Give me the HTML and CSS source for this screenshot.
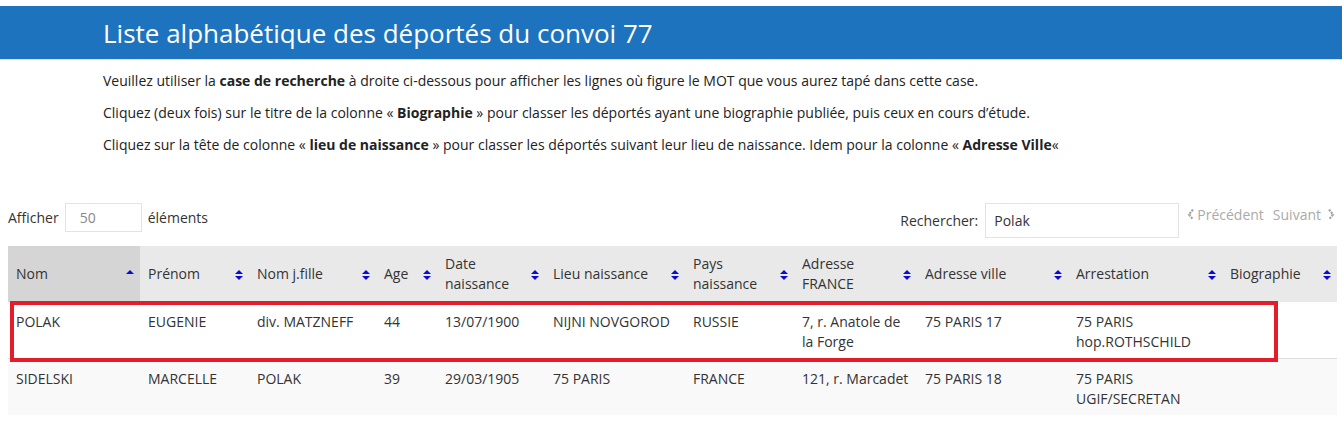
FILE: index.html
```html
<!DOCTYPE html>
<html lang="fr">
<head>
<meta charset="utf-8">
<title>Liste alphabétique des déportés du convoi 77</title>
<link rel="stylesheet" href="styles.css">
</head>
<body>
<header class="band">
  <h1 class="title">Liste alphabétique des déportés du convoi 77</h1>
</header>
<section class="intro">
  <p>Veuillez utiliser la <b>case de recherche</b> à droite ci-dessous pour afficher les lignes où figure le MOT que vous aurez tapé dans cette case.</p>
  <p>Cliquez (deux fois) sur le titre de la colonne « <b>Biographie</b> » pour classer les déportés ayant une biographie publiée, puis ceux en cours d’étude.</p>
  <p>Cliquez sur la tête de colonne « <b>lieu de naissance</b> » pour classer les déportés suivant leur lieu de naissance. Idem pour la colonne « <b>Adresse Ville</b>«</p>
</section>
<main class="wrap">
  <div class="controls">
    <div class="length">
      <span>Afficher</span>
      <span class="select">50</span>
      <span>éléments</span>
    </div>
    <div class="right">
      <label class="search">Rechercher: <span class="search-box">Polak</span></label>
      <div class="pager">
        <svg class="chev" width="8" height="13" viewBox="0 0 8 13"><path d="M6 1.5 L2 6.5 L6 11.5" fill="none" stroke="#a8a8a8" stroke-width="2.2" stroke-dasharray="2.2 1"/></svg>
        <span>Précédent</span>
        <span class="next">Suivant</span>
        <svg class="chev" width="8" height="13" viewBox="0 0 8 13"><path d="M2 1.5 L6 6.5 L2 11.5" fill="none" stroke="#a8a8a8" stroke-width="2.2" stroke-dasharray="2.2 1"/></svg>
      </div>
    </div>
  </div>
  <div class="table-wrap">
    <table class="data">
      <colgroup>
        <col style="width:132px"><col style="width:109px"><col style="width:127px"><col style="width:61px">
        <col style="width:108px"><col style="width:140px"><col style="width:109px"><col style="width:123px">
        <col style="width:151px"><col style="width:154px"><col style="width:115px">
      </colgroup>
      <thead>
        <tr>
          <th class="sorted"><div class="th"><span>Nom</span><svg class="sort" width="8" height="12" viewBox="0 0 8 12"><path d="M0 5 L4 1 L8 5 Z" fill="#0a0ad4"/></svg></div></th>
          <th><div class="th"><span>Prénom</span><svg class="sort" width="8" height="12" viewBox="0 0 8 12"><path d="M0 5 L4 1 L8 5 Z M0 7 L4 11 L8 7 Z" fill="#0a0ad4"/></svg></div></th>
          <th><div class="th"><span>Nom j.fille</span><svg class="sort" width="8" height="12" viewBox="0 0 8 12"><path d="M0 5 L4 1 L8 5 Z M0 7 L4 11 L8 7 Z" fill="#0a0ad4"/></svg></div></th>
          <th><div class="th"><span>Age</span><svg class="sort" width="8" height="12" viewBox="0 0 8 12"><path d="M0 5 L4 1 L8 5 Z M0 7 L4 11 L8 7 Z" fill="#0a0ad4"/></svg></div></th>
          <th><div class="th"><span>Date<br>naissance</span><svg class="sort" width="8" height="12" viewBox="0 0 8 12"><path d="M0 5 L4 1 L8 5 Z M0 7 L4 11 L8 7 Z" fill="#0a0ad4"/></svg></div></th>
          <th><div class="th"><span>Lieu naissance</span><svg class="sort" width="8" height="12" viewBox="0 0 8 12"><path d="M0 5 L4 1 L8 5 Z M0 7 L4 11 L8 7 Z" fill="#0a0ad4"/></svg></div></th>
          <th><div class="th"><span>Pays<br>naissance</span><svg class="sort" width="8" height="12" viewBox="0 0 8 12"><path d="M0 5 L4 1 L8 5 Z M0 7 L4 11 L8 7 Z" fill="#0a0ad4"/></svg></div></th>
          <th><div class="th"><span>Adresse<br>FRANCE</span><svg class="sort" width="8" height="12" viewBox="0 0 8 12"><path d="M0 5 L4 1 L8 5 Z M0 7 L4 11 L8 7 Z" fill="#0a0ad4"/></svg></div></th>
          <th><div class="th"><span>Adresse ville</span><svg class="sort" width="8" height="12" viewBox="0 0 8 12"><path d="M0 5 L4 1 L8 5 Z M0 7 L4 11 L8 7 Z" fill="#0a0ad4"/></svg></div></th>
          <th><div class="th"><span>Arrestation</span><svg class="sort" width="8" height="12" viewBox="0 0 8 12"><path d="M0 5 L4 1 L8 5 Z M0 7 L4 11 L8 7 Z" fill="#0a0ad4"/></svg></div></th>
          <th><div class="th"><span>Biographie</span><svg class="sort" width="8" height="12" viewBox="0 0 8 12"><path d="M0 5 L4 1 L8 5 Z M0 7 L4 11 L8 7 Z" fill="#0a0ad4"/></svg></div></th>
        </tr>
      </thead>
      <tbody>
        <tr class="odd">
          <td>POLAK</td><td>EUGENIE</td><td>div. MATZNEFF</td><td>44</td><td>13/07/1900</td><td>NIJNI NOVGOROD</td><td>RUSSIE</td><td>7, r. Anatole de la Forge</td><td>75 PARIS 17</td><td>75 PARIS hop.ROTHSCHILD</td><td></td>
        </tr>
        <tr class="even">
          <td>SIDELSKI</td><td>MARCELLE</td><td>POLAK</td><td>39</td><td>29/03/1905</td><td>75 PARIS</td><td>FRANCE</td><td>121, r. Marcadet</td><td>75 PARIS 18</td><td>75 PARIS UGIF/SECRETAN</td><td></td>
        </tr>
      </tbody>
    </table>
    <div class="highlight"></div>
  </div>
</main>
</body>
</html>
```

FILE: styles.css
```css
* { box-sizing: border-box; }
html, body { margin: 0; padding: 0; background: #fff; }
body {
  font-family: "Open Sans", "Noto Sans", "DejaVu Sans", sans-serif;
  font-size: 14px;
  color: #333;
}
.band {
  margin-top: 6px;
  height: 54px;
  background: #1e73be;
  border-bottom: 1px solid #d8e4ef;
  padding-left: 103px;
  display: flex;
  align-items: center;
}
.title {
  margin: 0;
  font-size: 26px;
  font-weight: 400;
  color: #fff;
  letter-spacing: 0;
}
.intro {
  padding: 5px 0 0 103px;
}
.intro p {
  margin: 0;
  line-height: 32px;
  font-size: 14px;
  color: #222;
}
.intro b { font-weight: 700; }
.wrap {
  padding: 42px 5px 0 8px;
}
.controls {
  display: flex;
  justify-content: space-between;
  align-items: flex-start;
  height: 43px;
}
.length {
  display: flex;
  align-items: center;
  gap: 6px;
  height: 29px;
  color: #333;
}
.select {
  width: 77px;
  height: 29px;
  border: 1px solid #e3e3e3;
  padding-left: 14px;
  line-height: 27px;
  color: #888;
}
.right {
  display: flex;
  align-items: flex-start;
}
.search {
  display: flex;
  align-items: center;
  gap: 7px;
  height: 35px;
}
.search-box {
  width: 194px;
  height: 35px;
  border: 1px solid #e3e3e3;
  padding-left: 8px;
  line-height: 33px;
  color: #333;
}
.pager {
  display: flex;
  align-items: center;
  height: 22px;
  margin-left: 8px;
  color: #aaa;
}
.pager .chev { margin-right: 2px; }
.pager .next { margin-left: 9px; margin-right: 6px; }
.table-wrap { position: relative; }
.data {
  width: 1329px;
  table-layout: fixed;
  border-collapse: collapse;
}
.data th {
  background: #e9e9e9;
  text-align: left;
  font-weight: 400;
  padding: 8px 6px 8px 8px;
  line-height: 20px;
  height: 56px;
  color: #333;
}
.data th.sorted { background: #d5d5d5; }
.th {
  display: flex;
  align-items: center;
  justify-content: space-between;
}
.sort { flex: none; margin-top: 1px; }
.data td {
  padding: 10px 8px 6px 8px;
  line-height: 20px;
  vertical-align: top;
  height: 56px;
  color: #333;
}
.data tr.odd td { background: #fff; border-bottom: 1px solid #ddd; }
.data tr.even td { background: #f9f9f9; }
.highlight {
  position: absolute;
  left: 2px;
  top: 55px;
  width: 1268px;
  height: 61px;
  border: 4px solid #e31e2a;
  pointer-events: none;
}
```
